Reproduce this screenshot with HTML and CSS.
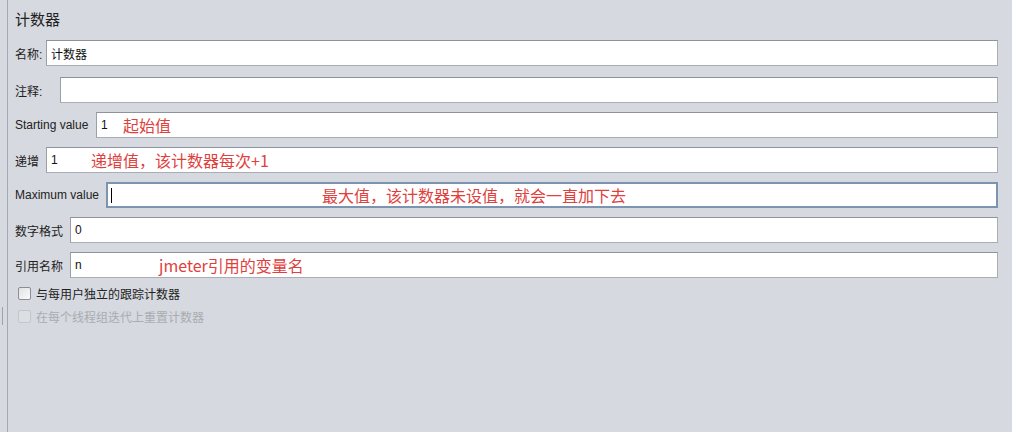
FILE: index.html
```html
<!DOCTYPE html>
<html lang="zh">
<head>
    <meta charset="UTF-8">
    <title>计数器</title>
    <link rel="stylesheet" href="styles.css">
</head>
<body>
    <div class="edge-mark"></div>
    <div class="panel">
        <h1 class="title">计数器</h1>

        <div class="row first">
            <label class="w-name">名称:</label>
            <div class="field"><input type="text" value="计数器"></div>
        </div>
        <div class="row">
            <label class="w-comment">注释:</label>
            <div class="field"><input type="text" value=""></div>
        </div>
        <div class="row">
            <label class="w-start">Starting value</label>
            <div class="field">
                <input type="text" value="1">
                <span class="note" style="left: 26px">起始值</span>
            </div>
        </div>
        <div class="row">
            <label class="w-name">递增</label>
            <div class="field">
                <input type="text" value="1">
                <span class="note" style="left: 44px">递增值，该计数器每次+1</span>
            </div>
        </div>
        <div class="row">
            <label class="w-max">Maximum value</label>
            <div class="field focused">
                <input type="text" value="">
                <span class="caret"></span>
                <span class="note" style="left: 214px">最大值，该计数器未设值，就会一直加下去</span>
            </div>
        </div>
        <div class="row">
            <label class="w-four">数字格式</label>
            <div class="field"><input type="text" value="0"></div>
        </div>
        <div class="row">
            <label class="w-four">引用名称</label>
            <div class="field">
                <input type="text" value="n">
                <span class="note" style="left: 88px">jmeter引用的变量名</span>
            </div>
        </div>

        <div class="check">
            <span class="box"></span>
            <span>与每用户独立的跟踪计数器</span>
        </div>
        <div class="check disabled">
            <span class="box"></span>
            <span>在每个线程组迭代上重置计数器</span>
        </div>
    </div>
</body>
</html>
```

FILE: styles.css
```css
html, body {
    margin: 0;
    padding: 0;
    height: 100%;
}

body {
    background: #d6d9df;
    font-family: "Liberation Sans", "Noto Sans CJK SC", sans-serif;
    font-size: 12px;
    color: #1e1e1e;
    overflow: hidden;
    position: relative;
}

.edge-mark {
    position: absolute;
    left: 0;
    top: 307px;
    width: 2px;
    height: 18px;
    border-right: 1px solid #9ea3ab;
}

.panel {
    margin-left: 7px;
    height: 100%;
    border-left: 1px solid #a4a9b1;
    padding: 6px 14px 0 7px;
    box-sizing: border-box;
}

.title {
    margin: 0 0 7px 0;
    font-size: 15px;
    font-weight: normal;
    height: 27px;
    line-height: 27px;
    color: #222;
}

.row {
    display: flex;
    align-items: center;
    gap: 4px;
    height: 26px;
    margin-bottom: 9px;
}

.row.first {
    margin-bottom: 11px;
}

.row label {
    white-space: nowrap;
    color: #222;
    flex: none;
}

.w-name { width: 27px; }
.w-comment { width: 41px; }
.w-start { width: 77px; }
.w-max { width: 87px; }
.w-four { width: 51px; }

.field {
    flex: 1;
    position: relative;
    height: 26px;
    border: 1px solid #a9aeb5;
    border-top-color: #8d939b;
    border-left-color: #9aa0a8;
    background: #fff;
    box-sizing: border-box;
}

.field input {
    border: none;
    outline: none;
    background: transparent;
    width: 100%;
    height: 100%;
    box-sizing: border-box;
    padding: 0 4px;
    font-family: "Liberation Sans", "Noto Sans CJK SC", sans-serif;
    font-size: 12px;
    color: #111;
}

.field.focused {
    border: 2px solid #7d94b0;
    background: #fff;
}

.caret {
    position: absolute;
    left: 3px;
    top: 4px;
    width: 1px;
    height: 15px;
    background: #000;
}

.note {
    position: absolute;
    top: 50%;
    transform: translateY(-50%);
    color: #e0403d;
    font-family: "Noto Sans CJK SC", sans-serif;
    font-size: 16px;
    white-space: nowrap;
    pointer-events: none;
}

.check {
    display: flex;
    align-items: center;
    gap: 5px;
    height: 23px;
    margin-left: 3px;
    margin-top: -5px;
    color: #222;
}

.check + .check {
    margin-top: 0;
}

.check .box {
    width: 11px;
    height: 11px;
    border: 1px solid #8a8e94;
    border-radius: 2px;
    background: linear-gradient(135deg, #dfe1e5, #fbfbfc);
}

.check.disabled {
    color: #a9acb1;
}

.check.disabled .box {
    border-color: #c3c6cb;
    background: #dcdee2;
}
```
